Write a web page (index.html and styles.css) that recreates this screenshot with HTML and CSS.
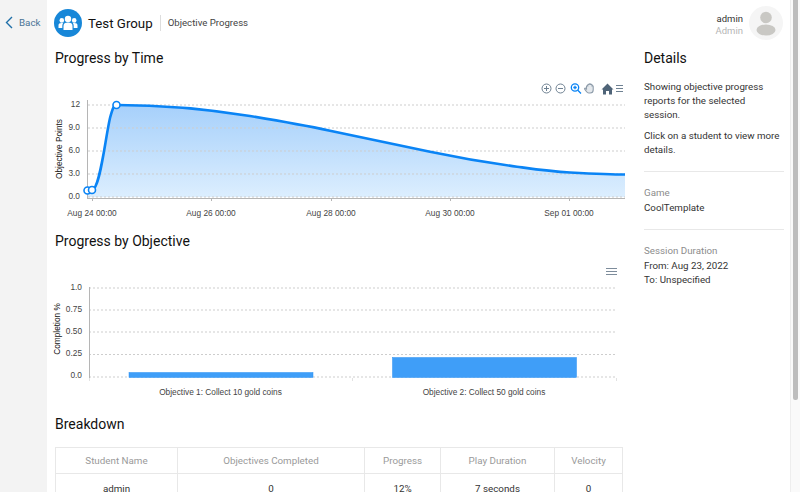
FILE: index.html
```html
<!DOCTYPE html>
<html lang="en">
<head>
    <meta charset="UTF-8">
    <meta name="viewport" content="width=device-width, initial-scale=1.0">
    <title>Objective Progress</title>
    <link rel="stylesheet" href="styles.css">
</head>
<body>
    <div class="app">
        <aside class="back-rail">
            <a class="back-link" href="#">
                <svg class="back-icon" width="8" height="13" viewBox="0 0 8 13"><path d="M7 1 1.500 6.500 7 12" fill="none" stroke="#1f6fa8" stroke-width="1.400"/></svg>
                <span>Back</span>
            </a>
        </aside>

        <div class="page">
            <header class="top-bar">
                <div class="group-badge">
                    <svg width="20" height="16" viewBox="0 0 20 16" fill="#fff">
                        <circle cx="10" cy="4" r="3.200"/>
                        <circle cx="3.800" cy="5.400" r="2.300"/>
                        <circle cx="16.200" cy="5.400" r="2.300"/>
                        <path d="M5.500 15V11c0-2.400 1.600-3.400 4.500-3.400s4.500 1 4.500 3.400v4z"/>
                        <path d="M0.500 13V10.500c0-1.600 1-2.400 3.200-2.400.6 0 1 .1 1.400.2-.6.7-.8 1.600-.8 2.700V13z"/>
                        <path d="M19.500 13V10.500c0-1.600-1-2.400-3.200-2.400-.6 0-1 .1-1.400.2.6.7.8 1.600.8 2.700V13z"/>
                    </svg>
                </div>
                <div class="group-name">Test Group</div>
                <div class="page-name">Objective Progress</div>
                <div class="user-info">
                    <div class="user-name">admin</div>
                    <div class="user-role">Admin</div>
                </div>
                <div class="user-avatar">
                    <svg width="34" height="34" viewBox="0 0 34 34" fill="#c9c8c4">
                        <circle cx="17" cy="11.500" r="5.800"/>
                        <ellipse cx="17" cy="24" rx="9.500" ry="5.500"/>
                    </svg>
                </div>
            </header>

            <div class="columns">
                <main class="content">
                    <h2 class="section-title">Progress by Time</h2>
                    <svg class="chart chart-time" width="570" height="150" viewBox="55 75 570 150">
                        <defs>
                            <linearGradient id="areaFill" x1="0" y1="0" x2="0" y2="1">
                                <stop offset="0" stop-color="#a6d0fb"/>
                                <stop offset="1" stop-color="#dceefe"/>
                            </linearGradient>
                        </defs>
                        <path d="M87 190.500 92 190C100 189 105 140 110 118 113 107 114 105 117 105C150 105 200 108 250 116 277 120.500 303 125 330 130.700 365 138 398 145 430 151.700 460 158 490 163 517 166.700 537 169.500 550 171.500 570 172.500 590 173.500 610 174.500 625 174.500V197H87z" fill="url(#areaFill)"/>
                        <g class="grid">
                            <path d="M88 105H625M88 128H625M88 151H625M88 174H625M88 197H625"/>
                        </g>
                        <path class="axis" d="M87.500 100V198M87 198.500H625M92.500 198V201M211.500 198V201M331.500 198V201M450.500 198V201M569.500 198V201"/>
                        <path d="M87 190.500 92 190C100 189 105 140 110 118 113 107 114 105 117 105C150 105 200 108 250 116 277 120.500 303 125 330 130.700 365 138 398 145 430 151.700 460 158 490 163 517 166.700 537 169.500 550 171.500 570 172.500 590 173.500 610 174.500 625 174.500" fill="none" stroke="#0a84f5" stroke-width="2.600"/>
                        <circle class="dot" cx="87.500" cy="190.500" r="3.500"/>
                        <circle class="dot" cx="92" cy="190" r="3.500"/>
                        <circle class="dot" cx="116.500" cy="105" r="3.500"/>
                        <g class="y-label">
                            <text x="80" y="107">12</text>
                            <text x="80" y="130">9.0</text>
                            <text x="80" y="153">6.0</text>
                            <text x="80" y="176">3.0</text>
                            <text x="80" y="199">0.0</text>
                        </g>
                        <text class="y-title" transform="translate(62 149) rotate(-90)">Objective Points</text>
                        <g class="x-label">
                            <text x="92" y="215.500">Aug 24 00:00</text>
                            <text x="211" y="215.500">Aug 26 00:00</text>
                            <text x="331" y="215.500">Aug 28 00:00</text>
                            <text x="450" y="215.500">Aug 30 00:00</text>
                            <text x="569" y="215.500">Sep 01 00:00</text>
                        </g>
                        <g stroke="#6e8192" fill="none" stroke-width="1">
                            <circle cx="546.500" cy="88.500" r="4.500"/>
                            <path d="M544 88.500h5M546.500 86v5"/>
                            <circle cx="560.500" cy="88.500" r="4.500"/>
                            <path d="M558 88.500h5"/>
                        </g>
                        <g stroke="#0a84f5" fill="none" stroke-width="1.300">
                            <circle cx="575" cy="87.500" r="3.700"/>
                            <path d="M577.800 90.300 581 93.500M573.300 87.500h3.400M575 85.800v3.400"/>
                        </g>
                        <path d="M586.500 89V86.500c0-1 1.300-1 1.300 0V85c0-1 1.400-1 1.400 0v-.5c0-1 1.400-1 1.400 0v.6c0-1 1.400-1 1.400 0v1.400c0-1 1.200-1 1.200 0v3.500c0 2-1.200 3-3 3h-1.500c-1.200 0-1.800-.8-2.300-1.500l-1.700-2.300c-.5-.8.500-1.500 1.200-.8z" fill="#e4e8ec" stroke="#8e9caa" stroke-width="1.100"/>
                        <path d="M601.500 89.500 607.500 83.500l6 6h-1.500V94.500h-3V91h-3v3.500h-3v-5z" fill="#4f6478"/>
                        <path d="M616 85.500h7M616 88.500h7M616 91.500h7" stroke="#6e8192" stroke-width="1.200" fill="none"/>
                    </svg>

                    <h2 class="section-title section-objective">Progress by Objective</h2>
                    <svg class="chart chart-objective" width="570" height="145" viewBox="55 260 570 145">
                        <g class="grid">
                            <path d="M89 288H616M89 310H616M89 332H616M89 354.500H616M89 377H616"/>
                        </g>
                        <rect class="bar" x="129" y="372.500" width="184" height="5"/>
                        <rect class="bar" x="392.500" y="357.500" width="184" height="20"/>
                        <path class="axis" d="M89.500 287V378"/>
                        <path class="tick" d="M352.500 378V381M616.500 378V381M89.500 378V381"/>
                        <g class="y-label">
                            <text x="82" y="290">1.0</text>
                            <text x="82" y="312">0.75</text>
                            <text x="82" y="334">0.50</text>
                            <text x="82" y="356">0.25</text>
                            <text x="82" y="378">0.0</text>
                        </g>
                        <text class="y-title" transform="translate(60 329) rotate(-90)">Completion %</text>
                        <g class="x-label">
                            <text x="220.500" y="395">Objective 1: Collect 10 gold coins</text>
                            <text x="484" y="395">Objective 2: Collect 50 gold coins</text>
                        </g>
                        <path d="M606 268.500h11M606 271.500h11M606 274.500h11" stroke="#7d8c9b" stroke-width="1.200" fill="none"/>
                    </svg>

                    <h2 class="section-title section-breakdown">Breakdown</h2>
                    <table class="breakdown">
                        <thead>
                            <tr>
                                <th class="col-name">Student Name</th>
                                <th class="col-objectives">Objectives Completed</th>
                                <th class="col-progress">Progress</th>
                                <th class="col-duration">Play Duration</th>
                                <th>Velocity</th>
                            </tr>
                        </thead>
                        <tbody>
                            <tr>
                                <td>admin</td>
                                <td>0</td>
                                <td>12%</td>
                                <td>7 seconds</td>
                                <td>0</td>
                            </tr>
                        </tbody>
                    </table>
                </main>

                <aside class="details">
                    <h2 class="section-title">Details</h2>
                    <div class="details-intro">
                        <p>Showing objective progress reports for the selected session.</p>
                        <p>Click on a student to view more details.</p>
                    </div>
                    <div class="details-block">
                        <div class="details-label">Game</div>
                        <div>CoolTemplate</div>
                    </div>
                    <div class="details-block">
                        <div class="details-label">Session Duration</div>
                        <div>From: Aug 23, 2022</div>
                        <div>To: Unspecified</div>
                    </div>
                </aside>
            </div>
        </div>

        <div class="scroll-track"><div class="scroll-thumb"></div></div>
    </div>
</body>
</html>
```

FILE: styles.css
```css
html, body { margin: 0; height: 100%; overflow: hidden; }
body { font-family: Roboto, "Liberation Sans", sans-serif; color: #222; background: #fff; }
.app { display: flex; height: 492px; overflow: hidden; }

.back-rail { width: 47px; flex: none; background: #f3f3f3; }
.back-link { display: flex; align-items: center; gap: 6px; padding: 16px 0 0 5px; color: #4a7396; font-size: 9.800px; line-height: 13px; text-decoration: none; }
.back-icon { flex: none; }

.page { flex: 1; min-width: 0; }
.top-bar { display: flex; align-items: center; height: 46px; padding-left: 7px; }
.group-badge { width: 28px; height: 28px; border-radius: 50%; background: #1787d8; display: flex; align-items: center; justify-content: center; }
.group-name { margin-left: 6px; padding-right: 7px; font-size: 13.300px; color: #111; line-height: 17px; }
.page-name { padding-left: 7px; border-left: 1px solid #ddd; font-size: 9.650px; line-height: 16px; color: #444; }
.user-info { margin-left: auto; padding-top: 3px; text-align: right; font-size: 9.500px; line-height: 12px; }
.user-name { color: #333; }
.user-role { color: #b5b5b5; }
.user-avatar { width: 34px; height: 34px; margin: 0 7px 0 6px; border-radius: 50%; background: #f5f5f5; }

.columns { display: flex; padding-top: 1px; }
.content { width: 568px; flex: none; padding-left: 8px; }
.section-title { margin: 0; font-size: 14px; font-weight: 400; line-height: 23px; color: #111; }
.chart { display: block; overflow: visible; }
.chart-time { margin-top: 5px; }
.section-objective { margin-top: 5px; }
.chart-objective { margin-top: 7px; }
.section-breakdown { margin-top: 8px; }

.grid path { fill: none; stroke: #cdcdcd; stroke-dasharray: 2 2; }
.axis { fill: none; stroke: #b5b5b5; }
.tick { fill: none; stroke: #e2e2e2; }
.dot { fill: #fff; stroke: #0a84f5; stroke-width: 1.600; }
.bar { fill: #3f9ef8; stroke: #2b90f3; stroke-width: 0.500; }
.y-label text { font: 8.300px "Liberation Sans", sans-serif; fill: #444; text-anchor: end; }
.x-label text { font: 8.300px "Liberation Sans", sans-serif; fill: #444; text-anchor: middle; }
.y-title { font: 8.300px "Liberation Sans", sans-serif; fill: #111; text-anchor: middle; }

.breakdown { width: 568px; margin-top: 11px; border-collapse: collapse; table-layout: fixed; font-size: 9.800px; }
.breakdown th, .breakdown td { border: 1px solid #e8e8e8; padding: 0; text-align: center; }
.breakdown th { height: 25px; font-weight: 400; color: #9a9a9a; }
.breakdown td { height: 29px; color: #333; }
.col-name { width: 121px; }
.col-objectives { width: 186px; }
.col-progress { width: 75px; }
.col-duration { width: 113px; }

.details { width: 140px; margin-left: 21px; flex: none; font-size: 9.750px; line-height: 14px; color: #333; }
.details p { margin: 0 0 7px; }
.details-intro { margin-top: 10px; padding: 0 2px 7px 0; }
.details-block { border-top: 1px solid #e8e8e8; padding: 14px 0; }
.details-label { color: #8c8c8c; margin-bottom: 1px; }

.scroll-track { width: 10px; flex: none; background: #fafafa; border-left: 1px solid #eee; box-sizing: border-box; padding-left: 2px; }
.scroll-thumb { width: 5px; height: 400px; background: #bdbdbd; border-radius: 0 0 2px 2px; }
```
